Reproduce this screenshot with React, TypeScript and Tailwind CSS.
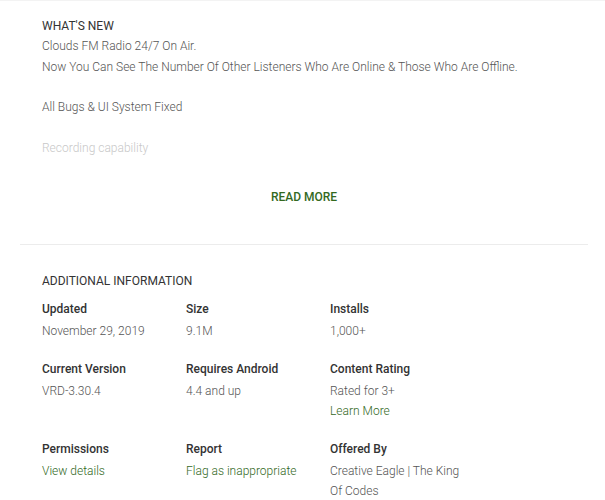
const details = [
  [
    { label: "Updated", values: ["November 29, 2019"] },
    { label: "Size", values: ["9.1M"] },
    { label: "Installs", values: ["1,000+"] },
  ],
  [
    { label: "Current Version", values: ["VRD-3.30.4"] },
    { label: "Requires Android", values: ["4.4 and up"] },
    { label: "Content Rating", values: ["Rated for 3+"], link: "Learn More" },
  ],
  [
    { label: "Permissions", link: "View details" },
    { label: "Report", link: "Flag as inappropriate" },
    { label: "Offered By", values: ["Creative Eagle | The King Of Codes"] },
  ],
];

export default function App() {
  return (
    <div className="w-[605px] h-[500px] overflow-hidden bg-white border-t border-[#f3f3f3] font-['Roboto',sans-serif] text-[12px] leading-[20.33px] font-light text-[#555]">
      <div className="ml-[20px] w-[568px]">
        {/* What's new */}
        <section className="px-[22px] pt-[15px]">
          <h2 className="text-[#333] font-normal uppercase">What's New</h2>
          <div>
            <p>Clouds FM Radio 24/7 On Air.</p>
            <p>Now You Can See The Number Of Other Listeners Who Are Online &amp; Those Who Are Offline.</p>
            <p>&nbsp;</p>
            <p>All Bugs &amp; UI System Fixed</p>
            <p>&nbsp;</p>
            <p className="text-[#c8c8c8]">Recording capability</p>
          </div>
          <div className="pt-[29px] flex justify-center">
            <button className="text-[#33691e] font-medium uppercase text-[12px] leading-[20px]">
              Read More
            </button>
          </div>
        </section>

        <div className="mt-[37px] h-px bg-[#ececec]" />

        {/* Additional information */}
        <section className="px-[22px] pt-[26px]">
          <h2 className="text-[#333] font-normal uppercase leading-[20px]">Additional Information</h2>
          <div className="mt-[8px] flex flex-col gap-[18px] leading-[20px]">
            {details.map((row, i) => (
              <div key={i} className="grid grid-cols-[144px_144px_144px]">
                {row.map((cell) => (
                  <div key={cell.label} className="flex flex-col">
                    <span className="text-[#333] font-medium mb-[2px]">{cell.label}</span>
                    {cell.values?.map((v) => (
                      <span key={v}>{v}</span>
                    ))}
                    {cell.link && <a className="text-[#33691e]">{cell.link}</a>}
                  </div>
                ))}
              </div>
            ))}
          </div>
        </section>
      </div>
    </div>
  );
}
